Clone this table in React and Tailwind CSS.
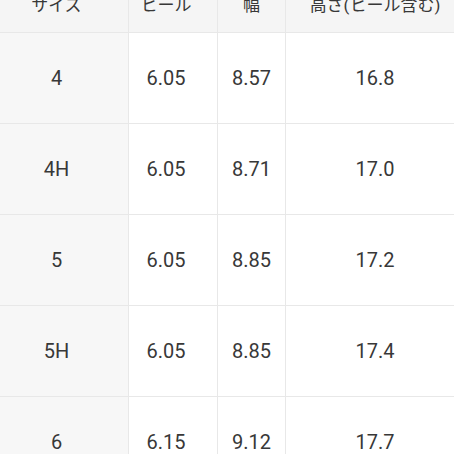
export default function App() {
  const rows = [
    ["4", "6.05", "8.57", "16.8"],
    ["4H", "6.05", "8.71", "17.0"],
    ["5", "6.05", "8.85", "17.2"],
    ["5H", "6.05", "8.85", "17.4"],
    ["6", "6.15", "9.12", "17.7"],
  ];
  const font = { fontFamily: 'Roboto, "Noto Sans CJK JP", sans-serif' };
  return (
    <div className="w-[454px] h-[454px] overflow-hidden bg-white text-[#383838]" style={font}>
      <div className="-mt-[24px]">
        <div className="grid grid-cols-[129px_89px_68px_1fr] h-[57px] bg-[#f5f5f5] border-b border-[#e8e8e8] text-[17px]">
          <div className="flex items-center justify-center pt-[3px] pr-[15px] border-r border-[#e8e8e8]">サイズ</div>
          <div className="flex items-center justify-center pt-[3px] pr-[14px] border-r border-[#e8e8e8]">ヒール</div>
          <div className="flex items-center justify-center pt-[3px] border-r border-[#e8e8e8]">幅</div>
          <div className="flex items-center justify-center pt-[3px] pl-[10px]">高さ(ヒール含む)</div>
        </div>
        {rows.map((r, i) => (
          <div key={i} className="grid grid-cols-[129px_89px_68px_1fr] h-[91px] border-b border-[#e8e8e8] text-[20px]">
            <div className="flex items-center justify-center pr-[15px] bg-[#f7f7f7] border-r border-[#e8e8e8]">{r[0]}</div>
            <div className="flex items-center justify-center pr-[14px] border-r border-[#e8e8e8]">{r[1]}</div>
            <div className="flex items-center justify-center border-r border-[#e8e8e8]">{r[2]}</div>
            <div className="flex items-center justify-center pl-[10px]">{r[3]}</div>
          </div>
        ))}
      </div>
    </div>
  );
}
